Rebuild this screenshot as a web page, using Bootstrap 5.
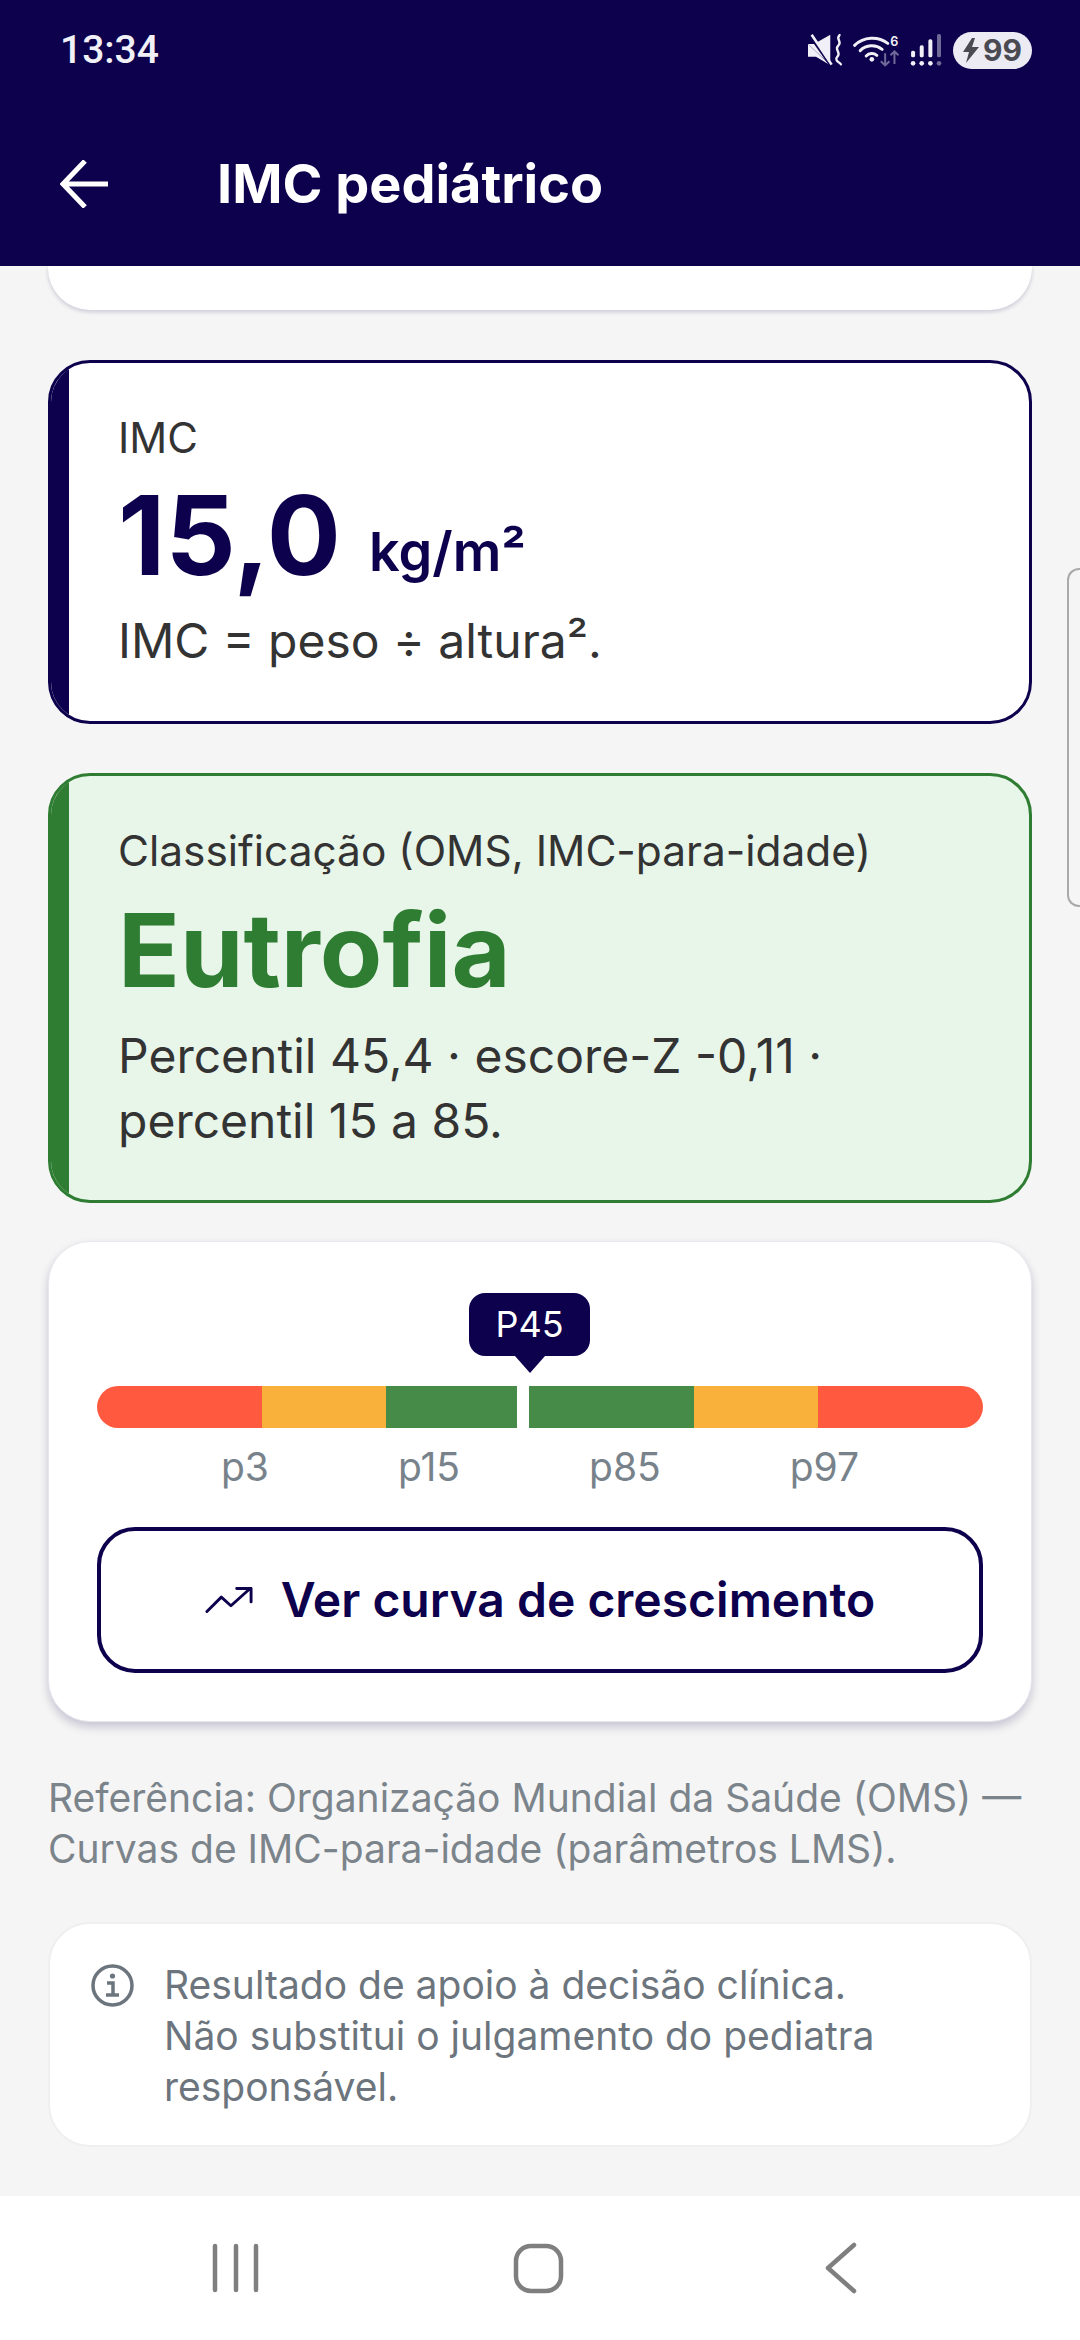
<!DOCTYPE html>
<html lang="pt-BR">
<head>
    <meta charset="UTF-8">
    <title>IMC pediátrico</title>
    <link href="https://cdn.jsdelivr.net/npm/bootstrap@5.3.0/dist/css/bootstrap.min.css" rel="stylesheet">
    <style>
        body {
            width: 1080px;
            height: 2340px;
            overflow: hidden;
            background-color: #f5f5f5;
            font-family: Inter, "Noto Sans", sans-serif;
            color: #333;
        }

        .app-head { height: 266px; background-color: #0d004d; color: #fff; }
        .status-row { height: 92px; padding: 8px 48px 0 60px; }
        .status-time { font-family: Roboto, sans-serif; font-size: 39px; font-weight: 500; color: #f1f0f6; }
        .batt-pill { width: 79px; height: 37px; border-radius: 19px; background-color: #ecebf3; color: #4a4a52; font-size: 30px; font-weight: 700; line-height: 37px; margin-left: 8px; }
        .title-row { height: 174px; padding: 9px 0 0 60px; }
        .head-title { font-size: 54px; font-weight: 700; margin: 0 0 0 109px; line-height: 1; }

        .page-body { height: 1930px; padding: 0 48px; position: relative; }
        .stub-card { height: 44px; background: #fff; border: 0; border-radius: 0 0 42px 42px; box-shadow: 0 2px 4px rgba(13,0,77,.18); }
        .value-card { border-radius: 42px; border: 3px solid #0d004d; background: #fff; overflow: hidden; }
        .accent-bar { width: 18px; background-color: #0d004d; }
        .value-body { padding: 50px 0 0 49px; }
        .imc-card { height: 364px; margin-top: 50px; }
        .class-card { height: 430px; margin-top: 49px; background: #e8f5e9; border-color: #2e7d32; }
        .class-card .accent-bar { background-color: #2e7d32; }
        .small-label { font-size: 42px; line-height: 49px; }
        .class-card .small-label { font-size: 42.4px; }
        .big-value { font-size: 110px; font-weight: 700; line-height: 104px; color: #0d004d; margin-top: 21px; }
        .big-unit { font-size: 54px; font-weight: 600; line-height: 1; margin-left: 2px; vertical-align: 4px; }
        .big-class { font-size: 102px; font-weight: 700; line-height: 112px; color: #2e7d32; margin-top: 19px; }
        .note-text { font-size: 48px; line-height: 65px; margin-top: 21px; }
        .class-card .note-text { margin-top: 17px; }

        .chart-card { height: 481px; margin-top: 38px; border-radius: 42px; border: 1px solid #e8e7ee; background: #fff; padding: 144px 48px 0; box-shadow: 0 5px 10px rgba(13,0,77,.2); }
        .scale-wrap { position: relative; }
        .scale-bar { height: 42px; border-radius: 21px; overflow: hidden; }
        .seg-red { background-color: #ff5a40; }
        .seg-amber { background-color: #fab13b; }
        .seg-green { background-color: #468b48; }
        .marker-tip { position: absolute; left: 372px; top: -93px; width: 121px; height: 63px; border-radius: 16px; background: #0d004d; color: #fff; font-size: 36px; line-height: 63px; text-align: center; }
        .marker-tip::after { content: ""; position: absolute; left: 46px; top: 63px; border-left: 15px solid transparent; border-right: 15px solid transparent; border-top: 17px solid #0d004d; }
        .scale-labels { gap: 129px; margin-top: 16px; font-size: 39px; line-height: 46px; color: #78828a; }
        .curve-btn { height: 146px; width: 100%; margin-top: 37px; border: 4px solid #0d004d; border-radius: 38px; background: #fff; color: #0d004d; font-size: 48px; font-weight: 600; gap: 28px; }
        .curve-btn:hover { background: #fff; color: #0d004d; border-color: #0d004d; }

        .ref-text { margin: 50px 0 0; font-size: 39px; line-height: 51px; color: #7b848b; }
        .info-card { height: 225px; margin-top: 48px; border-radius: 42px; border: 2px solid #efefef; background: #fff; padding: 35px 40px 0 41px; gap: 30px; }
        .info-icon { margin-top: 5px; }
        .info-text { font-size: 39px; line-height: 51px; color: #6c757d; margin: 0; }

        .side-tab { position: absolute; right: 0; top: 302px; width: 13px; height: 339px; border: 2px solid #aaa; border-right: 0; border-radius: 12px 0 0 12px; }

        .sys-nav { height: 144px; background: #fff; }
    </style>
</head>
<body>

<header class="app-head">
    <div class="status-row d-flex justify-content-between align-items-center">
        <span class="status-time">13:34</span>
        <div class="d-flex align-items-center">
            <svg width="138" height="60" viewBox="80 0 415 180">
                <path d="M83 72h18L150 44v90z" fill="#f1f0f6"/>
                <path d="M83 72v38h24l43 26z" fill="#f1f0f6"/>
                <path d="M88 44l64 92" stroke="#0d004d" stroke-width="10"/>
                <path d="M94 44l60 90" stroke="#f1f0f6" stroke-width="8"/>
                <path d="M178 45c-14 12 10 20-4 32s10 20-2 32 6 18 10 24" fill="none" stroke="#f1f0f6" stroke-width="7" stroke-linecap="round"/>
                <g fill="none" stroke="#f1f0f6" stroke-linecap="round">
                    <path d="M223 76a78 78 0 0 1 100-6" stroke-width="9"/>
                    <path d="M240 92a50 50 0 0 1 66-4" stroke-width="9"/>
                    <path d="M258 108a24 24 0 0 1 32-2" stroke-width="9"/>
                </g>
                <circle cx="275" cy="118" r="7" fill="#f1f0f6"/>
                <text x="330" y="77" font-family="Inter, sans-serif" font-size="38" font-weight="600" fill="#f1f0f6">6</text>
                <g fill="none" stroke="#6f6a96" stroke-width="6">
                    <path d="M315 100v36M302 124l13 12 13-12"/>
                    <path d="M343 132V92M331 106l12-12 12 12"/>
                </g>
                <g fill="#f1f0f6">
                    <rect x="393" y="92" width="12" height="20" rx="5"/>
                    <rect x="419" y="76" width="12" height="36" rx="5"/>
                    <rect x="445" y="58" width="12" height="54" rx="5"/>
                    <circle cx="399" cy="130" r="7"/>
                    <circle cx="425" cy="130" r="7"/>
                    <circle cx="451" cy="130" r="7"/>
                </g>
                <g fill="#6f6a96">
                    <rect x="471" y="42" width="12" height="70" rx="5"/>
                    <circle cx="477" cy="130" r="7"/>
                </g>
            </svg>
            <div class="batt-pill d-flex justify-content-center align-items-center gap-1">
                <svg width="16" height="25" viewBox="0 0 16 25"><path d="M9 0L0 14h6l-3 11L16 9H9l3-9z" fill="#4a4a52"/></svg>
                <span>99</span>
            </div>
        </div>
    </div>
    <div class="title-row d-flex align-items-center">
        <svg width="48" height="48" viewBox="0 0 48 48">
            <path d="M48 24H3M25 1L3 24l22 23" fill="none" stroke="#fff" stroke-width="5"/>
        </svg>
        <h1 class="head-title">IMC pediátrico</h1>
    </div>
</header>

<main class="page-body">
    <div class="card stub-card"></div>

    <section class="value-card imc-card d-flex">
        <div class="accent-bar flex-shrink-0"></div>
        <div class="value-body">
            <div class="small-label">IMC</div>
            <div class="big-value">15,0 <span class="big-unit">kg/m²</span></div>
            <div class="note-text">IMC = peso ÷ altura².</div>
        </div>
    </section>

    <section class="value-card class-card d-flex">
        <div class="accent-bar flex-shrink-0"></div>
        <div class="value-body">
            <div class="small-label">Classificação (OMS, IMC-para-idade)</div>
            <div class="big-class">Eutrofia</div>
            <div class="note-text">Percentil 45,4 · escore-Z -0,11 ·<br>percentil 15 a 85.</div>
        </div>
    </section>

    <section class="chart-card">
        <div class="scale-wrap">
            <div class="marker-tip">P45</div>
            <div class="scale-bar d-flex">
                <div class="seg-red" style="width: 165px"></div>
                <div class="seg-amber" style="width: 124px"></div>
                <div class="seg-green" style="width: 131px"></div>
                <div style="width: 12px"></div>
                <div class="seg-green" style="width: 165px"></div>
                <div class="seg-amber" style="width: 124px"></div>
                <div class="seg-red" style="width: 165px"></div>
            </div>
        </div>
        <div class="scale-labels d-flex justify-content-center">
            <span>p3</span><span>p15</span><span>p85</span><span>p97</span>
        </div>
        <button type="button" class="btn curve-btn d-flex justify-content-center align-items-center">
            <svg width="48" height="30" viewBox="0 0 50 30">
                <path d="M2 27L17 12l10 9L47 3M33 3h15v14" fill="none" stroke="#0d004d" stroke-width="3" stroke-linecap="round" stroke-linejoin="round"/>
            </svg>
            <span>Ver curva de crescimento</span>
        </button>
    </section>

    <p class="ref-text">Referência: Organização Mundial da Saúde (OMS) — Curvas de IMC-para-idade (parâmetros LMS).</p>

    <section class="info-card d-flex">
        <svg class="info-icon flex-shrink-0" width="43" height="43" viewBox="0 0 43 43">
            <circle cx="21.5" cy="21.5" r="19.5" fill="none" stroke="#6c757d" stroke-width="3.5"/>
            <circle cx="21.5" cy="12" r="2.6" fill="#6c757d"/>
            <path d="M16 19h6v12M15 31h13" fill="none" stroke="#6c757d" stroke-width="3.5"/>
        </svg>
        <p class="info-text">Resultado de apoio à decisão clínica.<br>Não substitui o julgamento do pediatra<br>responsável.</p>
    </section>

    <div class="side-tab"></div>
</main>

<nav class="sys-nav d-flex align-items-center">
    <svg width="1080" height="144" viewBox="0 0 1080 144">
        <path d="M215 50v44M236 50v44M256 50v44" stroke="#7f7f7f" stroke-width="4.5" stroke-linecap="round"/>
        <rect x="516" y="50" width="45" height="45" rx="15" fill="none" stroke="#7f7f7f" stroke-width="4.5"/>
        <path d="M854 49L828 72l26 23" fill="none" stroke="#7f7f7f" stroke-width="4.5" stroke-linecap="round" stroke-linejoin="round"/>
    </svg>
</nav>

</body>
</html>
